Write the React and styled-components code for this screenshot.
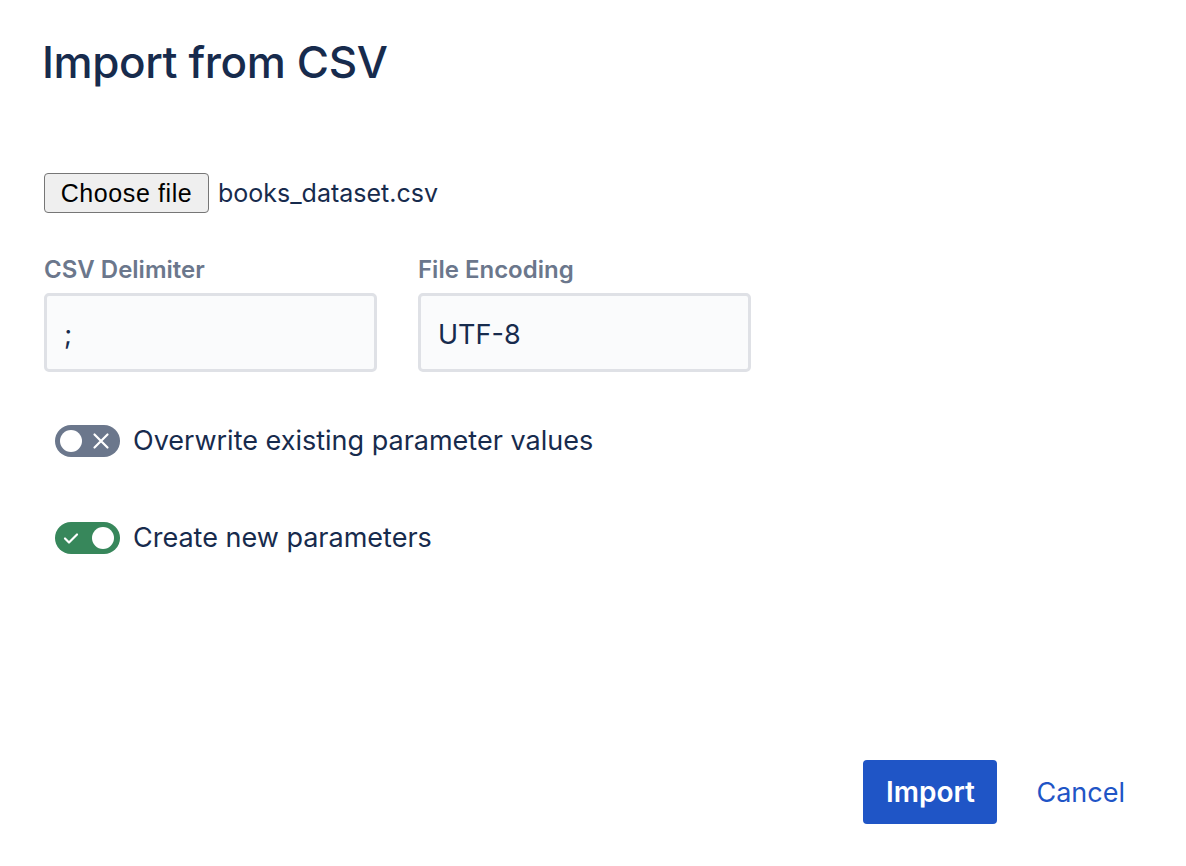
import React from "react";
import styled, { createGlobalStyle } from "styled-components";

const Global = createGlobalStyle`
  html, body { margin: 0; padding: 0; background: #fff; }
  body { font-family: Inter, "Noto Sans", sans-serif; color: #172B4D; }
  * { box-sizing: border-box; }
`;

const Page = styled.div`
  min-height: 866px;
  display: flex;
  flex-direction: column;
  padding: 28px 36px 42px 42px;
`;

const Title = styled.h1`
  margin: 0;
  font-size: 44px;
  font-weight: 500;
  letter-spacing: -0.4px;
  color: #172B4D;
  line-height: 68px;
`;

const FileRow = styled.div`
  display: flex;
  align-items: center;
  gap: 9px;
  margin-top: 77px;
  margin-left: 2px;
`;

const FileButton = styled.button`
  font-family: "Liberation Sans", Arial, sans-serif;
  font-size: 25px;
  letter-spacing: 0.6px;
  color: #000;
  background: #efefef;
  border: 1.5px solid #767676;
  border-radius: 4px;
  height: 40px;
  width: 165px;
  padding: 0;
`;

const FileName = styled.span`
  font-size: 25px;
  color: #172B4D;
`;

const Fields = styled.div`
  display: flex;
  gap: 41px;
  margin-top: 44px;
  margin-left: 2px;
`;

const Field = styled.div`
  display: flex;
  flex-direction: column;
  gap: 10px;
  width: 333px;
`;

const Label = styled.label`
  font-size: 24px;
  font-weight: 600;
  color: #6B778C;
  line-height: 26px;
`;

const Input = styled.div`
  height: 79px;
  background: #FAFBFC;
  border: 3px solid #DFE1E6;
  border-radius: 5px;
  display: flex;
  align-items: center;
  padding: 4px 17px 0;
  font-size: 27px;
  color: #172B4D;
`;

const Options = styled.div`
  display: flex;
  flex-direction: column;
  gap: 64px;
  margin-top: 52px;
  margin-left: 13px;
`;

const Option = styled.div`
  display: flex;
  align-items: center;
  gap: 13px;
  font-size: 27px;
  color: #172B4D;
`;

const Track = styled.span`
  position: relative;
  width: 65px;
  height: 32px;
  border-radius: 16px;
  background: ${p => (p.$on ? "#37875B" : "#6B778C")};
  display: inline-flex;
  flex: none;
`;

const Knob = styled.span`
  position: absolute;
  top: 5px;
  left: ${p => (p.$on ? "37px" : "5px")};
  width: 22px;
  height: 22px;
  border-radius: 50%;
  background: #fff;
`;

const Glyph = styled.svg`
  position: absolute;
  top: 6px;
  left: ${p => (p.$on ? "6px" : "36px")};
  width: 20px;
  height: 20px;
`;

const Footer = styled.div`
  margin-top: auto;
  display: flex;
  justify-content: flex-end;
  align-items: center;
  gap: 14px;
`;

const Primary = styled.button`
  font-family: Inter, sans-serif;
  height: 64px;
  width: 134px;
  padding: 0;
  background: #1F55C6;
  color: #fff;
  border: none;
  border-radius: 4px;
  font-size: 28px;
  font-weight: 600;
`;

const Subtle = styled.button`
  font-family: Inter, sans-serif;
  height: 64px;
  padding: 0 25px;
  background: none;
  border: none;
  color: #1F55C6;
  font-size: 27px;
`;

function Toggle({ on }) {
  return (
    <Track $on={on}>
      <Knob $on={on} />
      <Glyph $on={on} viewBox="0 0 20 20" fill="none" stroke="#fff" strokeWidth="2.2" strokeLinecap="round" strokeLinejoin="round">
        {on ? <path d="M4 10.5l4 4 8-8" /> : <path d="M3.5 3.5l13 13M16.5 3.5l-13 13" />}
      </Glyph>
    </Track>
  );
}

export default function App() {
  return (
    <>
      <Global />
      <Page>
        <Title>Import from CSV</Title>
        <FileRow>
          <FileButton>Choose file</FileButton>
          <FileName>books_dataset.csv</FileName>
        </FileRow>
        <Fields>
          <Field>
            <Label>CSV Delimiter</Label>
            <Input>;</Input>
          </Field>
          <Field>
            <Label>File Encoding</Label>
            <Input>UTF-8</Input>
          </Field>
        </Fields>
        <Options>
          <Option><Toggle on={false} />Overwrite existing parameter values</Option>
          <Option><Toggle on />Create new parameters</Option>
        </Options>
        <Footer>
          <Primary>Import</Primary>
          <Subtle>Cancel</Subtle>
        </Footer>
      </Page>
    </>
  );
}
